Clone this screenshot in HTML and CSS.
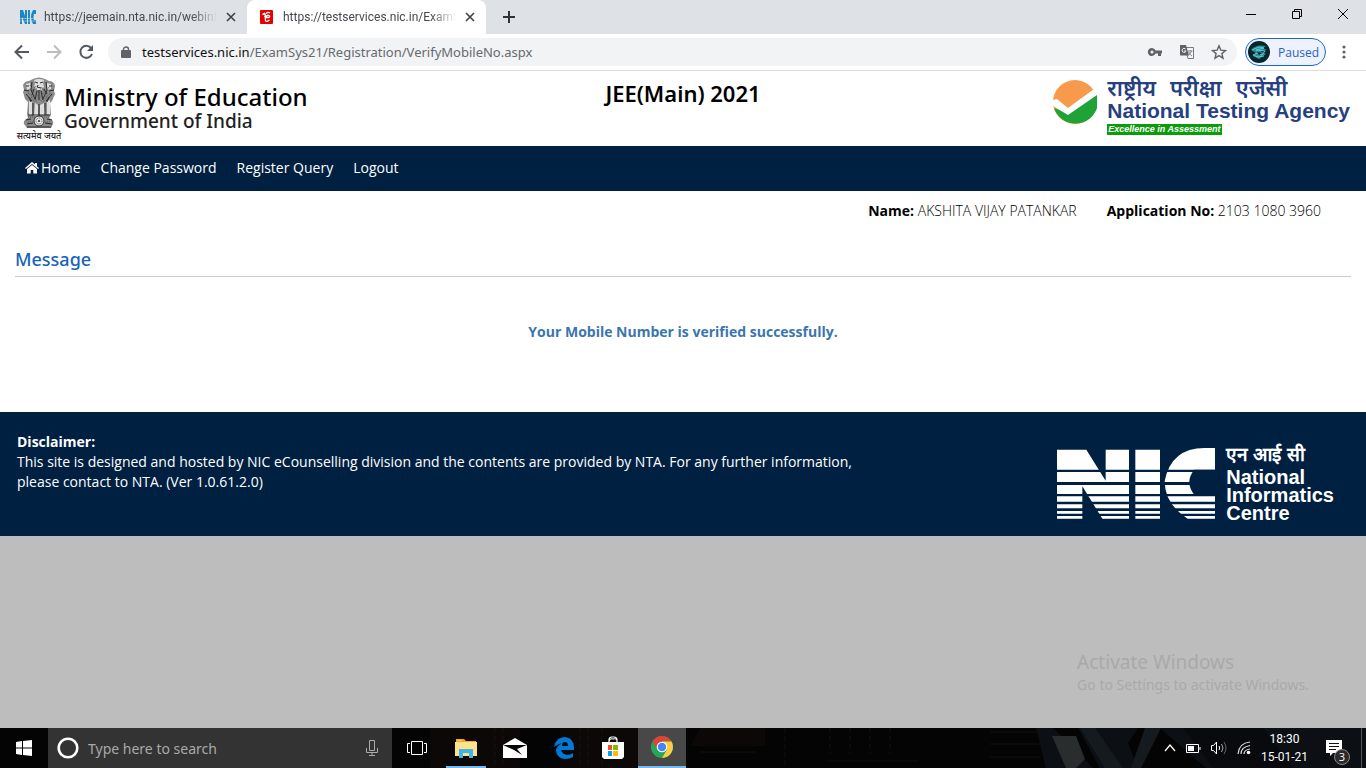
FILE: index.html
```html
<!DOCTYPE html>
<html lang="en">
<head>
<meta charset="utf-8">
<title>JEE(Main) 2021</title>
<link rel="stylesheet" href="styles.css">
</head>
<body>
<div class="screen">
  <header class="browser">
    <div class="tabs">
      <div class="tab">
        <svg class="favicon" viewBox="0 0 16 16" width="16" height="16"><path fill="#1b87c5" d="M0 1h3l2 6V1h2v14H5L2 8v7H0zM8 1h2v14H8zM16 1v4h-2q-1 3 0 6h2v4h-3q-4-7 0-14z"/><path stroke="#dee1e6" stroke-width=".5" d="M0 9.500h16M0 12h16"/></svg>
        <span class="tab-title">https://jeemain.nta.nic.in/webinfo</span>
        <button class="tab-close" aria-label="Close tab"><svg viewBox="0 0 10 10" width="10" height="10"><path d="M1 1l8 8M9 1L1 9" stroke="#3c4043" stroke-width="1.600"/></svg></button>
      </div>
      <div class="tab active">
        <svg class="favicon" viewBox="0 0 16 16" width="16" height="16"><rect x="1" y="1" width="13" height="14" rx="1" fill="#e60000"/><path fill="none" stroke="#fff" stroke-width="1.400" d="M3.500 5.500l2-1 1 2-1 1.500M7 4.500q2-2 4-.5M6.500 8.500h3q2-1 .5-2t-3 1-.5 4 4-.5"/></svg>
        <span class="tab-title">https://testservices.nic.in/ExamSy</span>
        <button class="tab-close" aria-label="Close tab"><svg viewBox="0 0 10 10" width="10" height="10"><path d="M1 1l8 8M9 1L1 9" stroke="#3c4043" stroke-width="1.600"/></svg></button>
      </div>
      <button class="new-tab" aria-label="New tab"><svg viewBox="0 0 12 12" width="12" height="12"><path d="M6 0v12M0 6h12" stroke="#2f3337" stroke-width="2"/></svg></button>
      <div class="window-buttons">
        <button aria-label="Minimize"><svg viewBox="0 0 10 10" width="10" height="10"><path d="M0 5.500h10" stroke="#000"/></svg></button>
        <button aria-label="Restore"><svg viewBox="0 0 10 10" width="10" height="10"><path d="M.5 2.500h7v7h-7zM2.500 2.500v-2h7v7h-2" fill="none" stroke="#000"/></svg></button>
        <button aria-label="Close"><svg viewBox="0 0 10 10" width="10" height="10"><path d="M0 0l10 10M10 0L0 10" stroke="#000"/></svg></button>
      </div>
    </div>
    <div class="toolbar">
      <button aria-label="Back"><svg viewBox="0 0 16 16" width="16" height="16"><path d="M15 8H2M8 1.500L1.500 8 8 14.500" fill="none" stroke="#55595e" stroke-width="2"/></svg></button>
      <button aria-label="Forward"><svg viewBox="0 0 16 16" width="16" height="16"><path d="M1 8h13M8 1.500L14.500 8 8 14.500" fill="none" stroke="#bbbdbf" stroke-width="2"/></svg></button>
      <button aria-label="Reload"><svg viewBox="0 0 16 16" width="16" height="16"><path d="M13 4A6 6 0 1 0 14 10" fill="none" stroke="#55595e" stroke-width="2"/><path d="M15 1v6H9z" fill="#55595e"/></svg></button>
      <div class="omnibox">
        <svg viewBox="0 0 10 13" width="10" height="13"><rect y="4" width="10" height="8" rx="1" fill="#5f6368"/><path d="M2.500 5V3.500a2.500 2.500 0 0 1 5 0V5" fill="none" stroke="#5f6368" stroke-width="1.400"/></svg>
        <a class="url" href="#"><b>testservices.nic.in</b>/ExamSys21/Registration/VerifyMobileNo.aspx</a>
        <button aria-label="Saved passwords"><svg viewBox="0 0 16 16" width="16" height="16"><path fill="#5f6368" fill-rule="evenodd" d="M8.500 6.500A4 4 0 1 0 8.500 9.500H11V12h3V9.500h1v-3zM5 6.500a1.500 1.500 0 1 1 0 3 1.500 1.500 0 0 1 0-3z"/></svg></button>
        <button aria-label="Translate"><svg viewBox="0 0 16 16" width="16" height="16"><path d="M6 3.500h8.500v11H9L8 11" fill="none" stroke="#777b7f"/><path d="M1 1h6l3 10.500H1.500L1 11z" fill="#5f6368"/><path d="M6.500 5A2 2 0 1 0 7 7H5" fill="none" stroke="#f1f3f4"/><path d="M9 7h4.500M11.200 6v1M9.500 8q2 3 3.500 4M12.500 7q-1 3-3 4" fill="none" stroke="#777b7f" stroke-width=".9"/></svg></button>
        <button aria-label="Bookmark"><svg viewBox="0 0 16 16" width="16" height="16"><path d="M8 1.800l1.800 4.300 4.700.4-3.600 3.100 1.100 4.600-4-2.500-4 2.500 1.100-4.600-3.600-3.100 4.700-.4z" fill="none" stroke="#5f6368" stroke-width="1.400"/></svg></button>
      </div>
      <button class="profile"><svg viewBox="0 0 22 22" width="22" height="22"><circle cx="11" cy="11" r="11" fill="#06252c"/><path d="M3 9Q8 3 18 5l-3 2 4 2-7 1 6 3-7 5-6-3 3-3z" fill="#278c99"/><path d="M4 9l7-3 5 1-8 2 9 1-3 4-5-2-4 2 5 2 6-1" fill="none" stroke="#62c6cf"/><path d="M9 11l5 1-3 2z" fill="#03191d"/></svg><span>Paused</span></button>
      <button class="menu" aria-label="Menu"><svg viewBox="0 0 4 14" width="4" height="14"><g fill="#5f6368"><circle cx="2" cy="2" r="1.600"/><circle cx="2" cy="7" r="1.600"/><circle cx="2" cy="12" r="1.600"/></g></svg></button>
    </div>
  </header>

  <main class="page">
    <div class="masthead">
      <div class="ministry">
        <div class="emblem">
          <svg viewBox="0 0 36 52" width="36" height="52">
            <path fill="#8b8b8b" d="M12 2q6-3 12 0l4 2q5 0 6 5l-1 5 1 3-3 7-2 2 1 12-2 3q5 2 4 6l-2 4H6l-3-4q-1-4 4-6l-1-4 1-12-3-3-2-7 1-2-1-5q2-4 6-4z"/>
            <path fill="#dedede" d="M13 3q5-2 10 0l-1 3 1 4-3 3h-4l-3-3 1-4zM5 7l4-1 1 5-4 2zM26 6l4 1v5l-4 1zM8 24l3 1v13H8zM14 26l3 2v11h-4zM19 28l4-2 1 12h-5zM26 24l3-1v15l-3-1z"/>
            <path fill="none" stroke="#292929" stroke-width="1" d="M14 5l3 1M19 6l3-1M17 8l-1 2 4 1M5 9h3M28 9h3M3 13l5 1M28 14l5-1M11 5l-1 8 4 9M25 5l1 8-4 9M13 12l-2 6M23 12l3 5M16 14l-2 9M20 14l2 9M18 13v10M5 17l6 7M31 17l-6 7M8 20l2 5M28 20l-2 5M12 26v12M18 27v12M24 26v12M7 38h22M5 43l5-1M26 42l5 1M6 47l6-1M24 46l7 1M6 50h24"/>
            <path fill="none" stroke="#555" stroke-dasharray="1 1" d="M9 8l3 6 2-5 3 7 4-6 3 6 4-6M7 16l5 4 3-4 3 6 4-6 3 4 5-4M10 20l4 5 4-3 4 3 4-5M7 40h22M7 45h5M24 45h5"/>
            <circle cx="18" cy="44" r="5" fill="#e2e2e2" stroke="#333"/><circle cx="18" cy="44" r="3" fill="none" stroke="#555" stroke-dasharray="1 1"/><circle cx="18" cy="44" r="1" fill="#333"/>
          </svg>
          <span lang="hi">सत्यमेव जयते</span>
        </div>
        <div class="ministry-name"><strong>Ministry of Education</strong><span>Government of India</span></div>
      </div>
      <h1>JEE(Main) 2021</h1>
      <div class="agency">
        <svg viewBox="0 0 44 44" width="44" height="44"><circle cx="22" cy="22" r="22" fill="#f79a4b"/><path fill="#1fa336" d="M44 14A22 22 0 0 1 1 28L15 33z"/><path fill="#fff" d="M0 20l4-1 11 9L41 9l3 5v1L15 35 0 26z"/></svg>
        <div class="agency-name"><span class="hindi" lang="hi"><span>राष्ट्रीय</span> <span>परीक्षा</span> <span>एजेंसी</span></span><strong>National Testing Agency</strong><em>Excellence in Assessment</em></div>
      </div>
    </div>
    <nav class="nav">
      <a href="#"><svg viewBox="0 0 14 12" width="14" height="12"><path fill="#fff" d="M7 0l3 2.600V1h2v3.400L14 6l-.8 1L7 2 .8 7 0 6zM7 3l5 4v4.500H8.300V8H5.700v3.500H2V7z"/></svg>Home</a>
      <a href="#">Change Password</a>
      <a href="#">Register Query</a>
      <a href="#">Logout</a>
    </nav>
    <section class="content">
      <div class="candidate"><span><b>Name:</b> AKSHITA VIJAY PATANKAR</span><span><b>Application No:</b> 2103 1080 3960</span></div>
      <h2>Message</h2>
      <p class="notice">Your Mobile Number is verified successfully.</p>
    </section>
    <footer class="footer">
      <p><b>Disclaimer:</b><br>This site is designed and hosted by NIC eCounselling division and the contents are provided by NTA. For any further information, please contact to NTA. (Ver 1.0.61.2.0)</p>
      <div class="nic">
        <svg viewBox="48 40 474 213" width="158" height="71">
          <path fill="#fff" d="M48 45h88l58 93V45h70v207h-80l-60-97v97H48zM283 45h74v207h-74zM522 40v212h-82q-69-44-69-112 19-100 120-100z"/>
          <path fill="#002042" d="M522 105h-62q-29 35-2 73h64z"/>
          <path fill="#002042" d="M48 105h474v7H48zM48 142h474v9H48zM48 178h474v7H48zM48 201h474v8H48zM48 221h474v8H48zM48 237h474v7H48z"/>
        </svg>
        <div class="nic-name"><span lang="hi">एन आई सी</span><strong>National<br>Informatics<br>Centre</strong></div>
      </div>
    </footer>
    <div class="watermark"><p>Activate Windows</p><small>Go to Settings to activate Windows.</small></div>
  </main>

  <div class="taskbar">
    <svg class="wallpaper" viewBox="0 0 1366 40" preserveAspectRatio="none">
      <path fill="#0b0807" d="M430 0h90v40h-90zM560 0h80v40h-80zM700 0h65v18h-75z"/>
      <path stroke="#15110f" stroke-dasharray="5 3" d="M495 0v40M503 0v40M580 0v40M588 0v40M602 0v40M785 0v40M830 0v26M850 0v26M870 0v26M890 0v26"/>
      <path stroke="#15110f" d="M990 4h50M990 16h50M990 29h50M828 33h90M700 24h55"/>
      <path fill="#0c1014" d="M1036 0h17l40 40h-47zM1078 0h60l-10 15 10 25h-38zM1160 0h206v40h-160z"/>
      <path fill="#292d2e" d="M1052 8h24l9 23-9 9h-10z"/><path fill="#151a1e" d="M1080 0h15l28 40h-18zM1145 0h16l-20 40h-10z"/>
      <path fill="#080a0d" d="M1183 0h80l30 40h-80z"/>
      <path stroke="#555" d="M1361.500 0v40"/>
    </svg>
    <button class="start" aria-label="Start"><svg viewBox="0 0 16 16" width="16" height="16"><path fill="#fff" d="M0 2l6-1v6.500H0zM7 1l9-1v7.500H7zM0 8.500h6V15l-6-1zM7 8.500h9V16l-9-1z"/></svg></button>
    <div class="search">
      <svg viewBox="0 0 22 22" width="22" height="22"><circle cx="11" cy="11" r="9.300" fill="none" stroke="#fff" stroke-width="2.600"/></svg>
      <input type="text" placeholder="Type here to search" aria-label="Type here to search">
      <svg viewBox="0 0 12 18" width="12" height="18"><path fill="none" stroke="#aaa" d="M3.500 1.500h5v10h-5zM.5 9v4.500h11V9M6 14v3M3 16.500h6"/></svg>
    </div>
    <div class="apps">
      <button aria-label="Task view"><svg viewBox="0 0 20 14" width="20" height="14"><path fill="none" stroke="#fff" d="M4.500.5h11v13h-11zM3 2.500H.5v9H3M17 2.500h2.500v9H17"/></svg></button>
      <button class="open" aria-label="File Explorer"><svg viewBox="0 0 22 20" width="22" height="20"><path fill="#e8ad24" d="M1 1h8l2 2h10v4H1z"/><path fill="#fde28b" d="M0 4h22v14H0z"/><path fill="#3fb4e8" d="M4 11h14v9h-4v-5H8v5H4z"/><path fill="#f4ce5b" d="M2 2h5v1H2z"/></svg></button>
      <button aria-label="Mail"><svg viewBox="0 0 24 20" width="24" height="20"><path fill="#fff" d="M0 7l12-7 12 7v13H0z"/><path fill="#050505" d="M0 7h24l-10 4 5 6-8-5z"/></svg></button>
      <button aria-label="Edge"><svg viewBox="0 0 20 22" width="20" height="22"><path fill="#0078d7" d="M0 10Q2 0 11 0q9 1 9 11v2H7q1 4 6 5 4 0 6-2v4q-3 2-8 2-8-1-9-8 0-5 6-8-4 1-8 4zM8 9h6q0-4-3-4T8 9z"/></svg></button>
      <button aria-label="Store"><svg viewBox="0 0 24 24" width="24" height="24"><path d="M8 7V4q0-3 3-3h2q3 0 3 3v3M8 5q1-3 4-2 4-1 4 2" fill="none" stroke="#fff" stroke-width="1.200"/><path fill="#fff" d="M1 6h22v15l-2 2H3l-2-2z"/><path fill="#f25022" d="M7 9h4v5H7z"/><path fill="#7fba00" d="M12 9h5v5h-5z"/><path fill="#00a4ef" d="M7 15h4v5H7z"/><path fill="#ffb900" d="M12 15h5v5h-5z"/></svg></button>
      <button class="current" aria-label="Chrome"><svg viewBox="0 0 22 22" width="22" height="22"><circle cx="11" cy="11" r="11" fill="#26a65b"/><path fill="#db4437" d="M1.500 5.500A11 11 0 0 1 20.500 5.500H11L6.500 13.500z"/><path fill="#ffcd40" d="M20.500 5.500A11 11 0 0 1 11 22l4.800-8L11 5.500z"/><circle cx="11" cy="11" r="5.300" fill="#fff"/><circle cx="11" cy="11" r="4.200" fill="#4285f4"/></svg></button>
    </div>
    <div class="tray">
      <svg viewBox="0 0 12 8" width="12" height="8"><path d="M1 7l5-6 5 6" fill="none" stroke="#fff" stroke-width="1.300"/></svg>
      <svg viewBox="0 0 15 9" width="15" height="9"><path d="M.5.5h12v8H.5zM14 3v3" fill="none" stroke="#fff"/><path fill="#fff" d="M2 2h6v5H2z"/></svg>
      <svg viewBox="0 0 16 14" width="16" height="14"><path fill="none" stroke="#fff" d="M.5 4.500h2l3-3.500v12l-3-3.500h-2zM8 5q1.500 2 0 4"/><path fill="none" stroke="#aaa" d="M10.500 3q3 4 0 8"/><path fill="none" stroke="#666" d="M13 1q4 6 0 12"/></svg>
      <svg viewBox="0 0 14 14" width="14" height="14"><path fill="none" stroke="#ddd" stroke-width="1.200" d="M1 13Q2 2 13 1M4 13q0-7 9-8.500M7 13q0-4 6-5"/><circle cx="11.500" cy="11.500" r="1.800" fill="#fff"/></svg>
      <div class="clock"><span>18:30</span><span>15-01-21</span></div>
      <button class="notifications" aria-label="3 notifications"><svg viewBox="0 0 16 16" width="16" height="16"><path fill="#fff" d="M0 0h16v13H7l-3 3v-3H0z"/><path stroke="#111" d="M3 3.500h10M3 6.500h10M3 9.500h7"/></svg><span class="count">3</span></button>
    </div>
  </div>
</div>
</body>
</html>
```
FILE: styles.css
```css
* { box-sizing: border-box; }
body { margin: 0; font-family: "Open Sans", "Noto Sans", sans-serif; font-size: 14px; color: #000; }
h1, h2, p { margin: 0; }
a { color: inherit; text-decoration: none; }
svg { display: block; flex: none; }
button { display: flex; align-items: center; justify-content: center; padding: 0; border: 0; background: none; font: inherit; color: inherit; }
.screen { display: flex; flex-direction: column; min-height: 100vh; }

.browser { border-bottom: 1px solid #dadce0; }
.tabs { display: flex; align-items: center; height: 34px; padding-left: 8px; background: #dee1e6; }
.tab { display: flex; align-items: center; width: 239px; height: 34px; padding: 0 8px 0 12px; border-radius: 8px 8px 0 0; font-family: Roboto, sans-serif; font-size: 12px; color: #45494d; }
.tab.active { background: #fff; }
.tab-title { flex: 1; min-width: 0; margin-left: 8px; white-space: nowrap; mask-image: linear-gradient(to right, #000 85%, transparent); }
.tab-close { flex: none; width: 16px; height: 16px; margin-left: 6px; }
.new-tab { width: 28px; height: 28px; margin-left: 9px; }
.window-buttons { display: flex; align-self: stretch; margin-left: auto; padding-bottom: 6px; }
.window-buttons button { width: 46px; }
.toolbar { display: flex; align-items: center; height: 36px; padding: 0 12px 0 14px; }
.toolbar > button { width: 16px; margin-right: 16px; }
.omnibox { display: flex; flex: 1; align-items: center; gap: 16px; height: 28px; margin-right: 8px; margin-left: -2px; padding: 0 10px 0 13px; border-radius: 14px; background: #f1f3f4; }
.omnibox button { width: 16px; }
.url { flex: 1; margin-left: -5px; font-family: "Noto Sans", sans-serif; font-size: 13px; color: #666a6e; }
.url b { font-weight: 400; color: #111; }
.toolbar .profile { justify-content: flex-start; gap: 8px; width: 81px; height: 28px; margin-right: 8px; padding-left: 2px; border: 1px solid #1967d2; border-radius: 14px; background: #edf2fc; font-size: 12px; color: #2962c4; }
.toolbar .menu { width: 20px; margin: 0; }

.page { position: relative; display: flex; flex: 1; flex-direction: column; background: #bdbdbd; }
.masthead { display: grid; grid-template-columns: 1fr auto 1fr; height: 75px; padding: 6px 16px; background: #fff; }
.ministry { display: flex; gap: 2px; }
.emblem { display: flex; flex-direction: column; align-items: center; width: 46px; font-size: 9px; font-weight: 500; line-height: 14px; white-space: nowrap; color: #222; }
.ministry-name { display: flex; flex-direction: column; padding-top: 6px; font-family: "Noto Sans", sans-serif; }
.ministry-name strong { font-size: 24px; font-weight: 500; line-height: 27px; }
.ministry-name span { font-size: 19px; font-weight: 500; line-height: 22px; color: #222; }
h1 { font-family: "Noto Sans", sans-serif; font-size: 22px; font-weight: 600; line-height: 33px; }
.agency { display: flex; gap: 10px; justify-self: end; padding-top: 3px; }
.agency-name { display: flex; flex-direction: column; align-items: flex-start; margin-top: -4px; font-family: "Liberation Sans", Arial, sans-serif; color: #263f80; }
.hindi { display: flex; gap: 14px; font-family: "Noto Sans", sans-serif; font-size: 22px; font-weight: 600; line-height: 23px; white-space: nowrap; }
.agency-name strong { font-size: 21px; line-height: 24px; white-space: nowrap; }
.agency-name em { margin-top: 1px; padding: 0 1px; background: #0b9b0b; font-size: 9px; font-weight: 700; line-height: 11px; color: #fff; }
.nav { display: flex; gap: 20px; align-items: center; height: 45px; padding: 0 25px 2px; background: #002042; color: #fff; }
.nav a { display: flex; gap: 2px; align-items: center; }
.content { padding: 10px 15px 70px; background: #fff; }
.candidate { display: flex; gap: 30px; justify-content: flex-end; padding-right: 30px; font-weight: 350; line-height: 20px; }
.candidate b, .notice, .footer b { font-weight: 700; }
h2 { margin-top: 24px; padding-bottom: 3px; border-bottom: 1px solid #ccc; font-family: "Noto Sans", sans-serif; font-size: 18px; font-weight: 500; line-height: 28px; color: #1763b8; }
.notice { margin-top: 45px; text-align: center; line-height: 20px; color: #3a76ad; }
.footer { display: flex; justify-content: space-between; min-height: 124px; padding: 20px 32px 14px 17px; background: #002042; color: #fff; }
.footer p { max-width: 850px; line-height: 20px; }
.nic { display: flex; gap: 11px; padding-top: 10px; }
.nic > svg { margin-top: 6px; }
.nic-name { display: flex; flex-direction: column; font-family: "Liberation Sans", Arial, sans-serif; }
.nic-name span { font-size: 19px; font-weight: 700; line-height: 26px; white-space: nowrap; }
.nic-name strong { font-size: 20px; line-height: 18px; }
.watermark { position: absolute; right: 57px; bottom: 33px; font-family: "Noto Sans", sans-serif; color: #a9a9a9; }
.watermark p { font-size: 19px; line-height: 26px; }
.watermark small { display: block; font-size: 14px; line-height: 20px; }

.taskbar { position: relative; display: flex; height: 40px; background: #050404; color: #fff; }
.wallpaper { position: absolute; inset: 0; width: 100%; height: 100%; }
.start, .search, .apps, .tray { position: relative; }
.start { width: 48px; }
.search { display: flex; align-items: center; width: 344px; padding: 0 14px 0 9px; background: #333; }
.search input { flex: 1; min-width: 0; padding: 0 9px; border: 0; outline: 0; background: transparent; font: 14px "Noto Sans", sans-serif; color: #fff; }
.search input::placeholder { color: #a9a9a9; opacity: 1; }
.apps { display: flex; gap: 1px; padding-left: 1px; }
.apps button { width: 48px; }
.apps .open { background: linear-gradient(#76b9ed, #76b9ed) center bottom / 40px 2px no-repeat; }
.apps .current { border-bottom: 2px solid #76b9ed; background: #484848; }
.tray { display: flex; gap: 10px; align-items: center; margin-left: auto; padding-right: 16px; }
.clock { display: flex; flex-direction: column; align-items: center; font-family: Roboto, sans-serif; font-size: 12px; line-height: 18px; }
.notifications { position: relative; width: 24px; height: 24px; margin-left: 8px; justify-content: flex-start; }
.count { position: absolute; right: 0; bottom: -5px; width: 16px; height: 16px; border: 1px solid #888; border-radius: 50%; background: #2b2b2b; font-size: 11px; line-height: 14px; text-align: center; }
```
